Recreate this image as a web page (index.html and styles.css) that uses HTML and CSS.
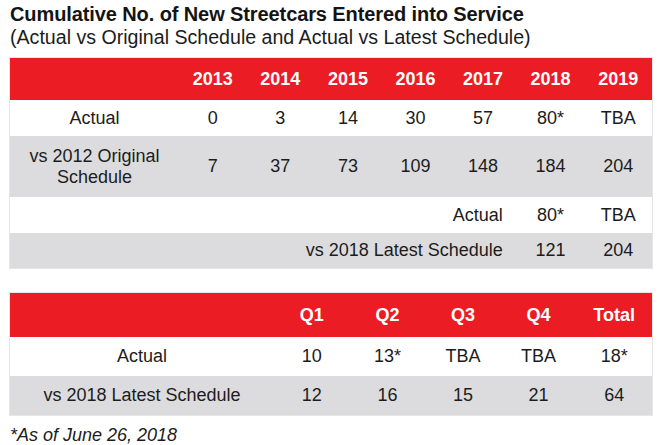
FILE: index.html
```html
<!DOCTYPE html>
<html>
<head>
<meta charset="utf-8">
<link rel="stylesheet" href="styles.css">
</head>
<body>
<div class="page">
  <h1 class="title">Cumulative No. of New Streetcars Entered into Service</h1>
  <p class="subtitle">(Actual vs Original Schedule and Actual vs Latest Schedule)</p>

  <div class="frame frame-years">
    <table class="grid grid-years">
      <colgroup>
        <col class="col-label-years">
        <col><col><col><col><col><col><col>
      </colgroup>
      <thead>
        <tr class="row-head">
          <th></th><th>2013</th><th>2014</th><th>2015</th><th>2016</th><th>2017</th><th>2018</th><th>2019</th>
        </tr>
      </thead>
      <tbody>
        <tr class="row-white">
          <td>Actual</td><td>0</td><td>3</td><td>14</td><td>30</td><td>57</td><td>80*</td><td>TBA</td>
        </tr>
        <tr class="row-gray row-tall">
          <td class="two-line">vs 2012 Original<br>Schedule</td><td>7</td><td>37</td><td>73</td><td>109</td><td>148</td><td>184</td><td>204</td>
        </tr>
        <tr class="row-white">
          <td colspan="6" class="span-label">Actual</td><td>80*</td><td>TBA</td>
        </tr>
        <tr class="row-gray row-short">
          <td colspan="6" class="span-label">vs 2018 Latest Schedule</td><td>121</td><td>204</td>
        </tr>
      </tbody>
    </table>
  </div>

  <div class="frame frame-quarters">
    <table class="grid grid-quarters">
      <colgroup>
        <col class="col-label-quarters">
        <col><col><col><col><col>
      </colgroup>
      <thead>
        <tr class="row-head row-head-q">
          <th></th><th>Q1</th><th>Q2</th><th>Q3</th><th>Q4</th><th>Total</th>
        </tr>
      </thead>
      <tbody>
        <tr class="row-white row-q">
          <td>Actual</td><td>10</td><td>13*</td><td>TBA</td><td>TBA</td><td>18*</td>
        </tr>
        <tr class="row-gray row-q">
          <td>vs 2018 Latest Schedule</td><td>12</td><td>16</td><td>15</td><td>21</td><td>64</td>
        </tr>
      </tbody>
    </table>
  </div>

  <p class="footnote">*As of June 26, 2018</p>
</div>
</body>
</html>
```

FILE: styles.css
```css
html, body {
  margin: 0;
  padding: 0;
  background: #ffffff;
}

body {
  font-family: "Liberation Sans", Arial, sans-serif;
  color: #1c1c1c;
  width: 660px;
  height: 445px;
  overflow: hidden;
}

.page {
  padding: 3px 0 0 10px;
}

.title {
  margin: 0;
  font-size: 20px;
  font-weight: bold;
  line-height: 22px;
  color: #141414;
  letter-spacing: -0.1px;
}

.subtitle {
  margin: 0;
  font-size: 19.6px;
  font-weight: normal;
  line-height: 24px;
  color: #1c1c1c;
}

.frame {
  margin-left: -1px;
  width: 642px;
  border: 1px solid #e6e6e6;
}

.frame-years {
  margin-top: 8px;
}

.frame-quarters {
  margin-top: 23px;
}

.grid {
  width: 100%;
  border-collapse: collapse;
  table-layout: fixed;
  font-size: 18px;
}

.col-label-years {
  width: 169px;
}

.col-label-quarters {
  width: 264px;
}

.grid th,
.grid td {
  padding: 0;
  text-align: center;
  vertical-align: middle;
  white-space: nowrap;
}

.row-head {
  background: #ec1c24;
  color: #ffffff;
  height: 42px;
}

.row-head th {
  font-weight: bold;
  font-size: 18px;
}

.row-head-q {
  height: 44px;
}

.row-white {
  background: #ffffff;
  height: 36px;
}

.row-gray {
  background: #dcdcde;
  height: 36px;
}

.row-tall {
  height: 61px;
}

.row-short {
  height: 35px;
}

.row-q {
  height: 39px;
}

.two-line {
  line-height: 21px;
}

.span-label {
  text-align: right !important;
  padding-right: 14px !important;
}

.footnote {
  margin: 9px 0 0 0;
  font-size: 18px;
  font-style: italic;
  line-height: 20px;
  color: #1c1c1c;
}
```
